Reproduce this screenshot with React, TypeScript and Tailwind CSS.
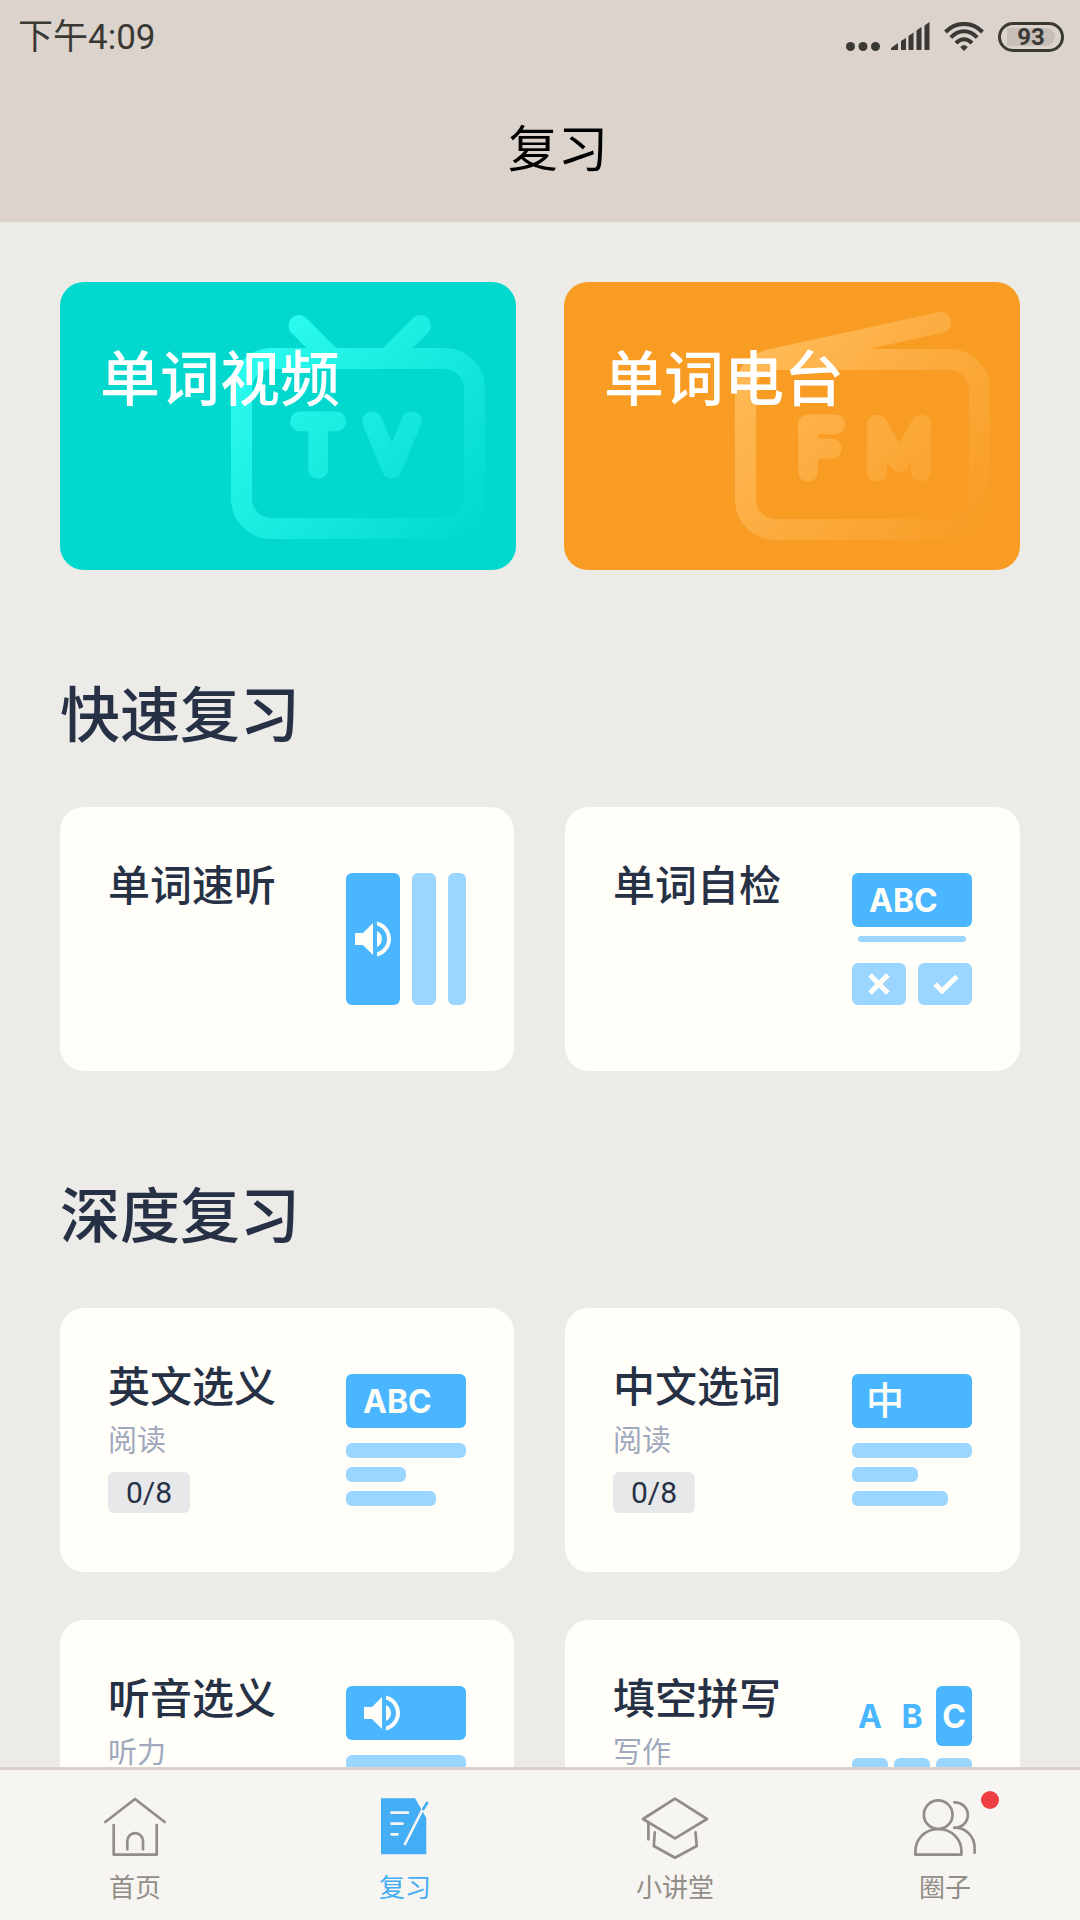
import React from 'react';
import { MdVolumeUp } from 'react-icons/md';

interface PracticeCardProps {
  title: string;
  subtitle?: string;
  progress?: string;
  children: React.ReactNode;
}

interface NavItemProps {
  label: string;
  active?: boolean;
  badge?: boolean;
  children: React.ReactNode;
}

const StatusBar: React.FC = () => (
  <div className="flex h-[74px] items-center justify-between pl-[18px] pr-4 text-[#3a3935]">
    <span className="pt-[3px] text-[35px]">下午4:09</span>
    <div className="flex items-center gap-[14px]">
      <svg width="84" height="30" viewBox="0 0 84 30" fill="currentColor">
        <circle cx="4.5" cy="24.5" r="4.5" />
        <circle cx="17" cy="24.5" r="4.5" />
        <circle cx="29.5" cy="24.5" r="4.5" />
        <path d="M45 28v-2l7-5v7z" />
        <path d="M55 19l5-3v12h-5z" />
        <path d="M62.500 14l5-3.500v17.500h-5z" />
        <path d="M70.500 8.500l5-3.500v23h-5z" />
        <path d="M78.500 3.500l5-3.500v28h-5z" />
      </svg>
      <svg width="40" height="30" viewBox="0 0 40 30" fill="none" stroke="currentColor" strokeWidth="4">
        <path d="M1.500 10C12-.8 28-.8 38.500 10" />
        <path d="M6.800 15.500C14.500 7.200 25.500 7.200 33.200 15.500" />
        <path d="M12 21.200C16.800 16 23.200 16 28 21.200" />
        <path d="M16.300 25.200c2.200-2.600 5.200-2.600 7.400 0L20 29z" fill="currentColor" stroke="none" />
      </svg>
      <div className="flex h-[30px] w-[66px] items-center rounded-full border-[3px] border-current px-[6px] py-[3px]">
        <span className="flex h-[18px] w-full items-center justify-center rounded-l-[4px] rounded-r-full bg-[#c6beb7] text-2xl font-bold">
          93
        </span>
      </div>
    </div>
  </div>
);

const TvArt: React.FC = () => (
  <svg className="absolute right-0 top-0 h-full" viewBox="0 0 456 288" fill="none">
    <defs>
      <linearGradient id="tv" gradientUnits="userSpaceOnUse" x1="200" y1="70" x2="410" y2="260">
        <stop offset="0" stopColor="#2bfaee" />
        <stop offset="1" stopColor="#02d8cd" />
      </linearGradient>
    </defs>
    <g stroke="url(#tv)" strokeWidth="21" strokeLinecap="round" strokeLinejoin="round">
      <path d="M239 43.500L269 73.500M360.500 43.500L330.500 73.500" />
      <rect x="181.500" y="76.500" width="233" height="170" rx="30" />
    </g>
    <g
      className="font-['Lato'] text-[68px] font-thin"
      fill="url(#tv)"
      stroke="url(#tv)"
      strokeWidth="19"
      strokeLinejoin="round"
      textAnchor="middle"
    >
      <text x="258" y="187">T</text>
      <text x="332" y="187">V</text>
    </g>
  </svg>
);

const RadioArt: React.FC = () => (
  <svg className="absolute right-0 top-0 h-full" viewBox="0 0 456 288" fill="none">
    <defs>
      <linearGradient id="fm" gradientUnits="userSpaceOnUse" x1="200" y1="70" x2="410" y2="260">
        <stop offset="0" stopColor="#ffb955" />
        <stop offset="1" stopColor="#f89c24" />
      </linearGradient>
    </defs>
    <g stroke="url(#fm)" strokeWidth="21" strokeLinecap="round" strokeLinejoin="round">
      <path d="M376.500 40.500L205 78" />
      <rect x="181.500" y="77.500" width="234" height="170" rx="30" />
    </g>
    <g
      className="font-['Lato'] text-[68px] font-thin"
      fill="url(#fm)"
      stroke="url(#fm)"
      strokeWidth="19"
      strokeLinejoin="round"
      textAnchor="middle"
    >
      <text x="255" y="190">F</text>
      <text x="335" y="190">M</text>
    </g>
  </svg>
);

const SectionTitle: React.FC<{ children: React.ReactNode }> = ({ children }) => (
  <h2 className="mb-[45px] mt-[102px] text-[60px] font-medium leading-[90px] text-[#273145]">{children}</h2>
);

const PracticeCard: React.FC<PracticeCardProps> = ({ title, subtitle, progress, children }) => (
  <button className="flex min-h-[264px] items-start justify-between rounded-3xl bg-[#fffef9] px-12 text-left">
    <span className="flex flex-col items-start pt-[50px]">
      <span className="text-[42px] font-medium leading-[60px] text-[#273145]">{title}</span>
      {subtitle && <span className="text-[29px] leading-[46px] text-[#a0a8bd]">{subtitle}</span>}
      {progress && (
        <span className="mt-2 rounded-md bg-[#e6e8ea] px-[18px] text-[30px] leading-[41px] text-[#273145]">
          {progress}
        </span>
      )}
    </span>
    <span className="mt-[66px] flex h-[132px] w-[120px] shrink-0">{children}</span>
  </button>
);

const ListenArt: React.FC = () => (
  <span className="flex w-full gap-3">
    <span className="flex w-[54px] items-center justify-center rounded-md bg-[#4ab6ff] text-[#fffef9]">
      <MdVolumeUp size={48} />
    </span>
    <span className="w-6 rounded-md bg-[#9ad6ff]" />
    <span className="w-[18px] rounded-md bg-[#9ad6ff]" />
  </span>
);

const Banner: React.FC<{ children: React.ReactNode }> = ({ children }) => (
  <span className="flex h-[54px] items-center rounded-md bg-[#4ab6ff] text-[#fffef9]">{children}</span>
);

const CheckArt: React.FC = () => (
  <span className="flex w-full flex-col">
    <Banner>
      <span className="pl-[17px] pt-[2px] font-['Inter'] text-[32px] font-bold">ABC</span>
    </Banner>
    <span className="mx-[6px] mt-[9px] h-[6px] rounded-full bg-[#9ad6ff]" />
    <span className="mt-[21px] flex gap-3 text-[#fffef9]">
      <svg className="rounded-md bg-[#9ad6ff]" width="54" height="42" fill="none" stroke="currentColor" strokeWidth="5">
        <path d="M18 12l18 18M36 12L18 30" />
      </svg>
      <svg className="rounded-md bg-[#9ad6ff]" width="54" height="42" fill="none" stroke="currentColor" strokeWidth="5">
        <path d="M17 21l7 7L39 13.500" />
      </svg>
    </span>
  </span>
);

const ChoiceArt: React.FC<{ short: string; long: string; children: React.ReactNode }> = ({ short, long, children }) => (
  <span className="flex w-full flex-col">
    <Banner>{children}</Banner>
    <span className="mt-[15px] flex flex-col gap-[9px]">
      <span className="h-[15px] rounded-md bg-[#9ad6ff]" />
      <span className={`h-[15px] rounded-md bg-[#9ad6ff] ${short}`} />
      <span className={`h-[15px] rounded-md bg-[#9ad6ff] ${long}`} />
    </span>
  </span>
);

const SpellArt: React.FC = () => (
  <span className="grid w-full grid-cols-3 grid-rows-[60px_60px] gap-x-[6px] gap-y-3 font-['Inter'] text-[32px] font-bold text-[#4ab6ff]">
    <span className="flex items-center justify-center pt-[2px]">A</span>
    <span className="flex items-center justify-center pt-[2px]">B</span>
    <span className="flex items-center justify-center rounded-md bg-[#4ab6ff] pt-[2px] text-[#fffef9]">C</span>
    <span className="rounded-md bg-[#9ad6ff]" />
    <span className="rounded-md bg-[#9ad6ff]" />
    <span className="rounded-md bg-[#9ad6ff]" />
  </span>
);

const NavItem: React.FC<NavItemProps> = ({ label, active, badge, children }) => (
  <a
    href="#"
    className={`flex flex-1 flex-col items-center gap-[7px] pt-[21px] ${active ? 'text-[#43adf5]' : 'text-[#918d87]'}`}
  >
    <span className="relative">
      <svg
        width="72"
        height="72"
        viewBox="0 0 72 72"
        fill="none"
        stroke="currentColor"
        strokeWidth="2.7"
        strokeLinecap="round"
        strokeLinejoin="round"
      >
        {children}
      </svg>
      {badge && <span className="absolute left-full top-0 size-[18px] rounded-full bg-[#ee4043]" />}
    </span>
    <span className="text-[26px] leading-9">{label}</span>
  </a>
);

export default function App() {
  return (
    <div className="flex h-screen flex-col bg-[#edebe8] font-[Roboto,'Noto_Sans_CJK_SC',sans-serif]">
      <header className="bg-[#dbd3cc]">
        <StatusBar />
        <h1 className="flex h-[148px] items-center justify-center pl-9 pt-1 text-[50px] text-black">复习</h1>
      </header>

      <main className="min-h-0 flex-1 overflow-y-auto px-[60px] py-[60px] [scrollbar-width:none]">
        <div className="grid grid-cols-2 gap-12">
          <button className="relative flex h-72 items-start overflow-hidden rounded-3xl bg-[#02d8cd] px-10 pt-[54px]">
            <TvArt />
            <span className="relative text-[60px] font-medium leading-[90px] text-white">单词视频</span>
          </button>
          <button className="relative flex h-72 items-start overflow-hidden rounded-3xl bg-[#f89c24] px-10 pt-[54px]">
            <RadioArt />
            <span className="relative text-[60px] font-medium leading-[90px] text-white">单词电台</span>
          </button>
        </div>

        <SectionTitle>快速复习</SectionTitle>
        <div className="grid grid-cols-[454fr_455fr] gap-x-[51px] gap-y-12">
          <PracticeCard title="单词速听">
            <ListenArt />
          </PracticeCard>
          <PracticeCard title="单词自检">
            <CheckArt />
          </PracticeCard>
        </div>

        <SectionTitle>深度复习</SectionTitle>
        <div className="grid grid-cols-[454fr_455fr] gap-x-[51px] gap-y-12">
          <PracticeCard title="英文选义" subtitle="阅读" progress="0/8">
            <ChoiceArt short="w-[60px]" long="w-[90px]">
              <span className="pl-[17px] pt-[2px] font-['Inter'] text-[32px] font-bold">ABC</span>
            </ChoiceArt>
          </PracticeCard>
          <PracticeCard title="中文选词" subtitle="阅读" progress="0/8">
            <ChoiceArt short="w-[66px]" long="w-[96px]">
              <span className="pl-[14px] text-[38px] font-medium">中</span>
            </ChoiceArt>
          </PracticeCard>
          <PracticeCard title="听音选义" subtitle="听力">
            <ChoiceArt short="w-[60px]" long="w-[90px]">
              <MdVolumeUp className="ml-3" size={48} />
            </ChoiceArt>
          </PracticeCard>
          <PracticeCard title="填空拼写" subtitle="写作">
            <SpellArt />
          </PracticeCard>
        </div>
      </main>

      <nav className="flex h-[153px] shrink-0 border-t-[3px] border-[#dbd3cb] bg-[#f7f5f1]">
        <NavItem label="首页">
          <path d="M6.300 31L36 8l29.700 23" />
          <path d="M14.700 34v29.700h43V34" />
          <path d="M28.300 58.300V50a7.850 7.850 0 0 1 15.700 0v8.300" />
        </NavItem>
        <NavItem label="复习" active>
          <path d="M12 7.300h34l6.700 11.500L57.300 27v36.300H12z" fill="currentColor" stroke="none" />
          <path d="M22.500 21.700H39M22.500 32.700h11M22.500 43.300h6M36 53l17.300-34" stroke="#f7f5f1" />
          <path d="M54.300 18L58 12" />
        </NavItem>
        <NavItem label="小讲堂">
          <path d="M36 7.700L68 28 36 47.300 4 28z" />
          <path d="M9.400 31.700v16.600" />
          <path d="M15.800 41.300l-1 13.700L36 66.700 57.700 55l-1.200-13.700" />
        </NavItem>
        <NavItem label="圈子" badge>
          <circle cx="29.200" cy="23.700" r="14.300" />
          <path d="M6.400 63.700V60c0-12 10-22 23-22s23 10 23 22v3.700z" />
          <path d="M45.300 11.300c8 0 13.500 5.700 13.500 12.700s-5.500 12.700-13.500 12.700c12 0 20.300 9 20.300 20v5" />
        </NavItem>
      </nav>
    </div>
  );
}
